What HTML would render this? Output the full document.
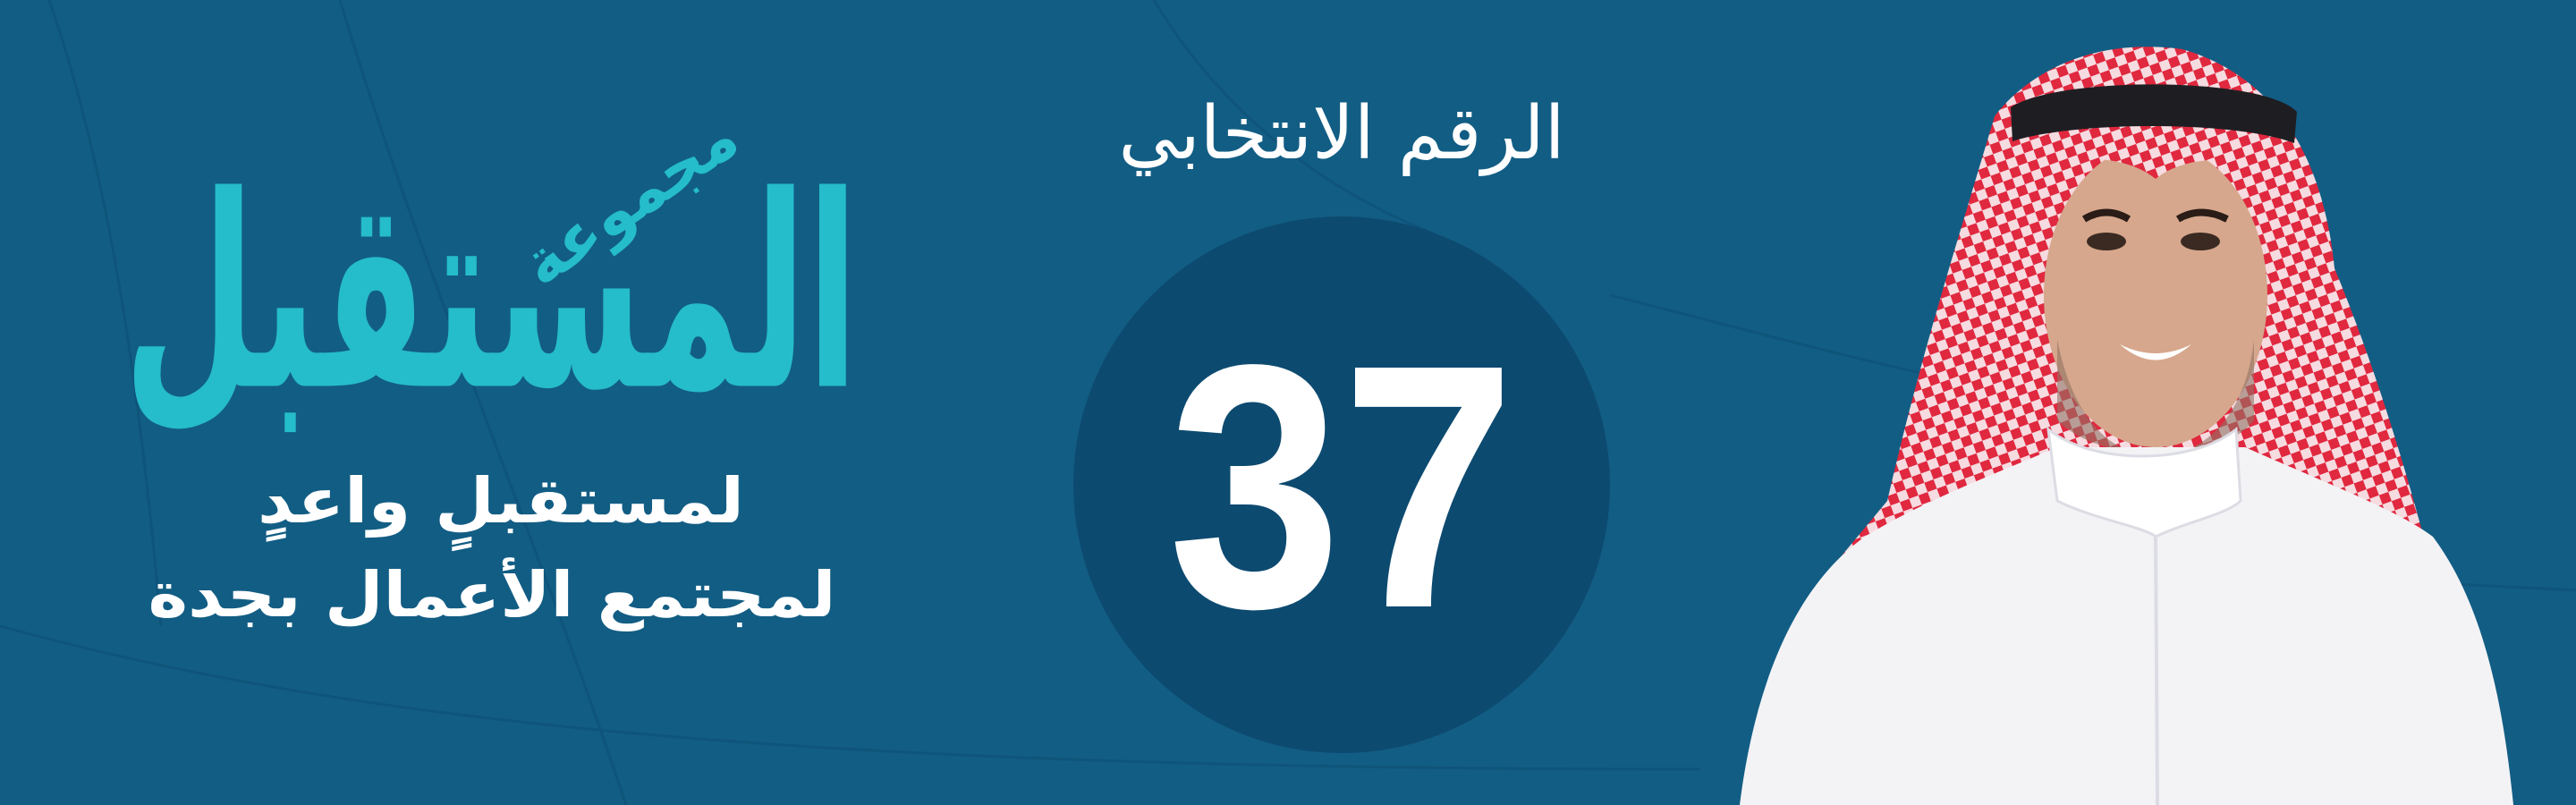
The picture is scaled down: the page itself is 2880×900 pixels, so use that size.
<!DOCTYPE html>
<html><head><meta charset="utf-8"><style>
html,body{margin:0;padding:0}
body{width:2880px;height:900px;background:#125d84;position:relative;overflow:hidden;font-family:"DejaVu Sans",sans-serif}
.t{position:absolute;white-space:nowrap;direction:rtl;text-align:center}
</style></head><body>
<svg width="2880" height="900" style="position:absolute;left:0;top:0">
<defs>
<pattern id="chk" width="22" height="22" patternUnits="userSpaceOnUse" patternTransform="rotate(-20)">
<rect width="22" height="22" fill="#f6dbe0"/>
<rect x="0" y="0" width="11" height="11" fill="#e0283f"/>
<rect x="11" y="11" width="11" height="11" fill="#e0283f"/>
</pattern>
</defs>
<g stroke="#0f5278" stroke-width="3" fill="none" opacity="0.8">
<path d="M55 0 C110 160 150 360 180 700"/>
<path d="M380 0 C470 300 600 600 700 900"/>
<path d="M1290 0 C1350 100 1450 200 1600 260"/>
<path d="M1800 330 C2000 380 2200 440 2450 470"/>
<path d="M0 700 C400 810 900 860 1900 860"/>
<path d="M2200 660 C2500 640 2700 650 2880 660"/>
</g>
<circle cx="1500" cy="542" r="300" fill="#0d4a70"/>
<path d="M2200 230 C2170 330 2140 430 2110 560 L2060 620 L2720 640 C2700 560 2660 420 2610 300 C2600 200 2560 90 2440 55 C2330 40 2260 90 2230 130 Z" fill="url(#chk)"/>
<ellipse cx="2410" cy="330" rx="125" ry="170" fill="#d6a78c"/>
<path d="M2300 380 C2320 480 2370 510 2410 510 C2460 510 2510 470 2520 380 L2520 470 C2480 520 2350 520 2300 470 Z" fill="#8f7264" opacity="0.6"/>
<ellipse cx="2355" cy="270" rx="22" ry="10" fill="#3a2a22"/>
<ellipse cx="2460" cy="270" rx="22" ry="10" fill="#3a2a22"/>
<path d="M2330 245 Q2355 230 2380 245" stroke="#2a1c16" stroke-width="8" fill="none"/>
<path d="M2435 245 Q2460 230 2490 245" stroke="#2a1c16" stroke-width="8" fill="none"/>
<path d="M2370 385 Q2410 405 2450 385 Q2410 420 2370 385 Z" fill="#fff"/>
<path d="M2250 160 C2320 140 2480 140 2560 150 L2560 195 C2500 170 2440 175 2410 200 C2380 175 2320 170 2275 190 Z" fill="url(#chk)"/>
<path d="M2248 120 C2300 85 2530 85 2568 125 L2565 160 C2500 135 2320 135 2250 158 Z" fill="#1e1e22"/>
<path d="M2085 600 C2150 560 2230 530 2300 500 L2510 500 C2600 540 2680 570 2720 600 C2780 680 2800 800 2810 900 L1945 900 C1960 780 2000 660 2085 600 Z" fill="#f3f3f6"/>
<path d="M2290 480 L2300 560 C2340 580 2400 590 2410 600 C2440 585 2490 575 2505 560 L2500 480 C2450 520 2340 520 2290 480 Z" fill="#ffffff" stroke="#dcdce4" stroke-width="3"/>
<path d="M2410 600 L2412 900" stroke="#dcdce6" stroke-width="4"/>
</svg>
<div class="t" style="left:180px;top:230px;width:780px;font-size:170px;line-height:200px;color:#25bccb;font-weight:bold;transform:scaleY(1.75);transform-origin:50% 50%">المستقبل</div>
<div class="t" style="left:580px;top:180px;width:260px;font-size:70px;line-height:80px;color:#25bccb;font-weight:bold;transform:rotate(-35deg)">مجموعة</div>
<div class="t" style="left:150px;top:515px;width:820px;font-size:70px;line-height:90px;color:#fff;font-weight:bold;transform:scaleX(1.1)">لمستقبلٍ واعدٍ</div>
<div class="t" style="left:140px;top:615px;width:820px;font-size:70px;line-height:100px;color:#fff;font-weight:bold;transform:scaleX(1.08)">لمجتمع الأعمال بجدة</div>
<div class="t" style="left:1200px;top:95px;width:600px;font-size:82px;line-height:110px;color:#fff">الرقم الانتخابي</div>
<div style="position:absolute;left:1200px;top:335px;width:600px;text-align:center;font-family:'Liberation Sans',sans-serif;font-weight:bold;font-size:388px;line-height:420px;color:#fff;transform:scaleX(0.9)">37</div>
</body></html>
